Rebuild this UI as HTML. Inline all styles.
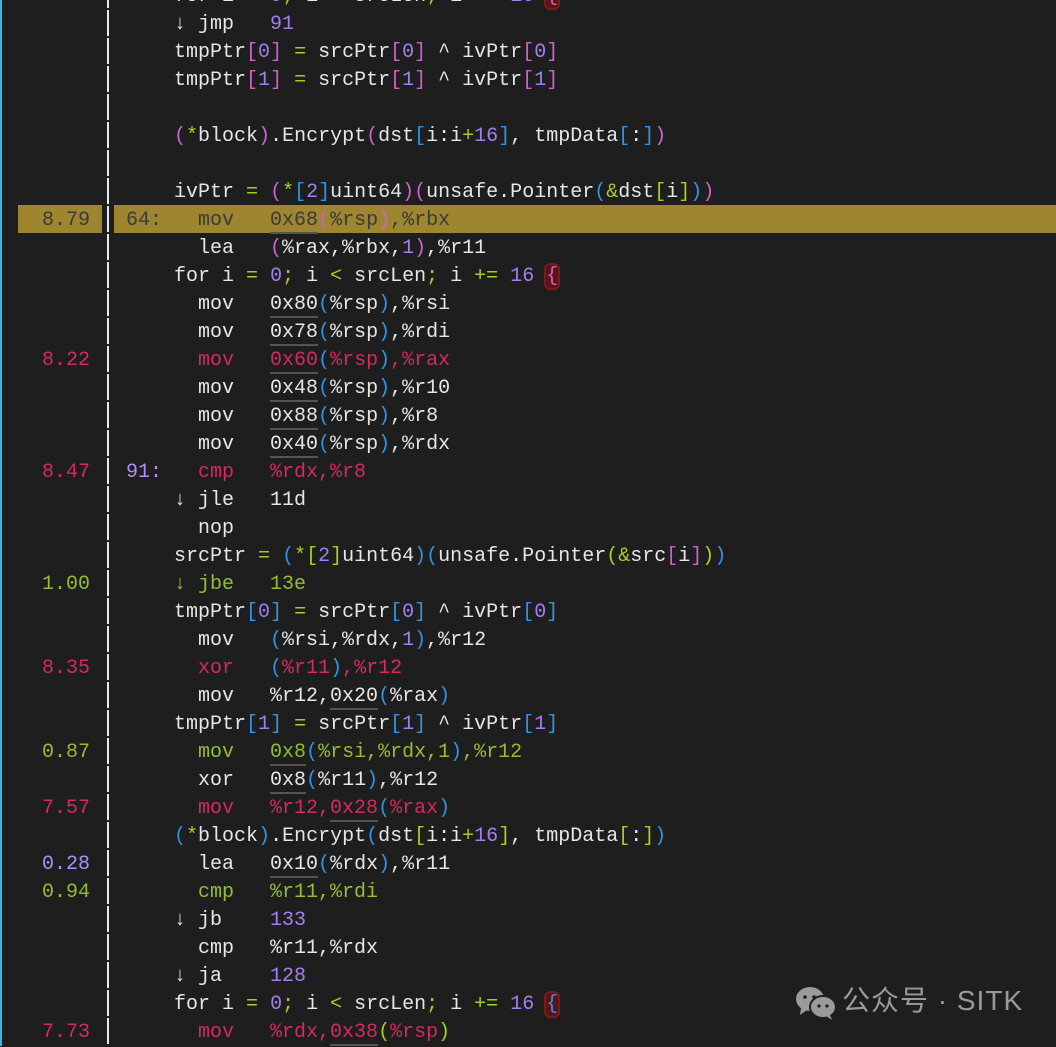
<!DOCTYPE html>
<html><head><meta charset="utf-8">
<style>
html,body{margin:0;padding:0;}
body{width:1056px;height:1046px;background:#1e1e1e;position:relative;overflow:hidden;font-family:"Liberation Mono",monospace;font-size:20px;color:#e6e6e6;}
.cy{position:absolute;left:0;top:0;width:2px;height:1046px;background:#3ab6d8;}
.row{position:absolute;left:0;width:1056px;height:28px;line-height:28px;}
.num{position:absolute;left:0;width:90px;text-align:right;white-space:pre;top:2px;}
.gl{position:absolute;left:107px;top:1px;width:2px;height:26px;background:#e8e8e8;}
.t{position:absolute;left:126px;white-space:pre;top:2px;}
.hl .hb1{position:absolute;left:18px;width:84px;top:0px;height:28px;background:#9e8530;}
.hl .hb2{position:absolute;left:114px;right:0;top:0px;height:28px;background:#9e8530;}
.hl .num,.hl .t{color:#3a3a36;}
.p{color:#d25fcf}.b{color:#2f93e8}.g{color:#a3cf2b}.n{color:#a27ff0}
.r{color:#d42a5c}.G{color:#93bd33}.P{color:#b08cff}
.u{border-bottom:2px solid #555;}
.br{outline:2px solid #7a1a1a;background:#5a1414;border-radius:4px;}
.wm{position:absolute;left:794px;top:986px;}
.wt{position:absolute;left:842px;top:983px;font-family:"Liberation Sans","Noto Sans CJK SC",sans-serif;font-size:28px;color:#9a9a9a;white-space:pre;line-height:36px;letter-spacing:1px;}
</style></head><body>
<div class="cy"></div>

<div class="row" style="top:-19px"><div class="gl"></div><div class="t">    for i <span class="g">=</span> <span class="n">0</span><span class="g">;</span> i <span class="g">&lt;</span> srcLen<span class="g">;</span> i <span class="g">+=</span> <span class="n">16</span> <span class="br p">{</span></div></div>
<div class="row" style="top:9px"><div class="gl"></div><div class="t">    ↓ jmp   <span class="n">91</span></div></div>
<div class="row" style="top:37px"><div class="gl"></div><div class="t">    tmpPtr<span class="p">[</span><span class="n">0</span><span class="p">]</span> <span class="g">=</span> srcPtr<span class="p">[</span><span class="n">0</span><span class="p">]</span> ^ ivPtr<span class="p">[</span><span class="n">0</span><span class="p">]</span></div></div>
<div class="row" style="top:65px"><div class="gl"></div><div class="t">    tmpPtr<span class="p">[</span><span class="n">1</span><span class="p">]</span> <span class="g">=</span> srcPtr<span class="p">[</span><span class="n">1</span><span class="p">]</span> ^ ivPtr<span class="p">[</span><span class="n">1</span><span class="p">]</span></div></div>
<div class="row" style="top:93px"><div class="gl"></div></div>
<div class="row" style="top:121px"><div class="gl"></div><div class="t">    <span class="p">(</span><span class="g">*</span>block<span class="p">)</span>.Encrypt<span class="p">(</span>dst<span class="b">[</span>i:i<span class="g">+</span><span class="n">16</span><span class="b">]</span>, tmpData<span class="b">[</span>:<span class="b">]</span><span class="p">)</span></div></div>
<div class="row" style="top:149px"><div class="gl"></div></div>
<div class="row" style="top:177px"><div class="gl"></div><div class="t">    ivPtr <span class="g">=</span> <span class="p">(</span><span class="g">*</span><span class="b">[</span><span class="n">2</span><span class="b">]</span>uint64<span class="p">)(</span>unsafe.Pointer<span class="b">(</span><span class="g">&amp;</span>dst<span class="g">[</span>i<span class="g">]</span><span class="b">)</span><span class="p">)</span></div></div>
<div class="row hl" style="top:205px"><div class="hb1"></div><div class="hb2"></div><div class="num">8.79</div><div class="gl"></div><div class="t">64:   mov   <span class="u">0x68</span><span class="p">(</span>%rsp<span class="p">)</span>,%rbx</div></div>
<div class="row" style="top:233px"><div class="gl"></div><div class="t">      lea   <span class="p">(</span>%rax,%rbx,<span class="n">1</span><span class="p">)</span>,%r11</div></div>
<div class="row" style="top:261px"><div class="gl"></div><div class="t">    for i <span class="g">=</span> <span class="n">0</span><span class="g">;</span> i <span class="g">&lt;</span> srcLen<span class="g">;</span> i <span class="g">+=</span> <span class="n">16</span> <span class="br p">{</span></div></div>
<div class="row" style="top:289px"><div class="gl"></div><div class="t">      mov   <span class="u">0x80</span><span class="b">(</span>%rsp<span class="b">)</span>,%rsi</div></div>
<div class="row" style="top:317px"><div class="gl"></div><div class="t">      mov   <span class="u">0x78</span><span class="b">(</span>%rsp<span class="b">)</span>,%rdi</div></div>
<div class="row" style="top:345px"><div class="num r">8.22</div><div class="gl"></div><div class="t r">      mov   <span class="u">0x60</span><span class="b">(</span>%rsp<span class="b">)</span>,%rax</div></div>
<div class="row" style="top:373px"><div class="gl"></div><div class="t">      mov   <span class="u">0x48</span><span class="b">(</span>%rsp<span class="b">)</span>,%r10</div></div>
<div class="row" style="top:401px"><div class="gl"></div><div class="t">      mov   <span class="u">0x88</span><span class="b">(</span>%rsp<span class="b">)</span>,%r8</div></div>
<div class="row" style="top:429px"><div class="gl"></div><div class="t">      mov   <span class="u">0x40</span><span class="b">(</span>%rsp<span class="b">)</span>,%rdx</div></div>
<div class="row" style="top:457px"><div class="num r">8.47</div><div class="gl"></div><div class="t r"><span class="P">91:</span>   cmp   %rdx,%r8</div></div>
<div class="row" style="top:485px"><div class="gl"></div><div class="t">    ↓ jle   11d</div></div>
<div class="row" style="top:513px"><div class="gl"></div><div class="t">      nop</div></div>
<div class="row" style="top:541px"><div class="gl"></div><div class="t">    srcPtr <span class="g">=</span> <span class="b">(</span><span class="g">*</span><span class="g">[</span><span class="n">2</span><span class="g">]</span>uint64<span class="b">)(</span>unsafe.Pointer<span class="g">(</span><span class="g">&amp;</span>src<span class="p">[</span>i<span class="p">]</span><span class="g">)</span><span class="b">)</span></div></div>
<div class="row" style="top:569px"><div class="num G">1.00</div><div class="gl"></div><div class="t G">    ↓ jbe   13e</div></div>
<div class="row" style="top:597px"><div class="gl"></div><div class="t">    tmpPtr<span class="b">[</span><span class="n">0</span><span class="b">]</span> <span class="g">=</span> srcPtr<span class="b">[</span><span class="n">0</span><span class="b">]</span> ^ ivPtr<span class="b">[</span><span class="n">0</span><span class="b">]</span></div></div>
<div class="row" style="top:625px"><div class="gl"></div><div class="t">      mov   <span class="b">(</span>%rsi,%rdx,<span class="n">1</span><span class="b">)</span>,%r12</div></div>
<div class="row" style="top:653px"><div class="num r">8.35</div><div class="gl"></div><div class="t r">      xor   <span class="b">(</span>%r11<span class="b">)</span>,%r12</div></div>
<div class="row" style="top:681px"><div class="gl"></div><div class="t">      mov   %r12,<span class="u">0x20</span><span class="b">(</span>%rax<span class="b">)</span></div></div>
<div class="row" style="top:709px"><div class="gl"></div><div class="t">    tmpPtr<span class="b">[</span><span class="n">1</span><span class="b">]</span> <span class="g">=</span> srcPtr<span class="b">[</span><span class="n">1</span><span class="b">]</span> ^ ivPtr<span class="b">[</span><span class="n">1</span><span class="b">]</span></div></div>
<div class="row" style="top:737px"><div class="num G">0.87</div><div class="gl"></div><div class="t G">      mov   <span class="u">0x8</span><span class="b">(</span>%rsi,%rdx,1<span class="b">)</span>,%r12</div></div>
<div class="row" style="top:765px"><div class="gl"></div><div class="t">      xor   <span class="u">0x8</span><span class="b">(</span>%r11<span class="b">)</span>,%r12</div></div>
<div class="row" style="top:793px"><div class="num r">7.57</div><div class="gl"></div><div class="t r">      mov   %r12,<span class="u">0x28</span><span class="b">(</span>%rax<span class="b">)</span></div></div>
<div class="row" style="top:821px"><div class="gl"></div><div class="t">    <span class="b">(</span><span class="g">*</span>block<span class="b">)</span>.Encrypt<span class="b">(</span>dst<span class="g">[</span>i:i<span class="g">+</span><span class="n">16</span><span class="g">]</span>, tmpData<span class="g">[</span>:<span class="g">]</span><span class="b">)</span></div></div>
<div class="row" style="top:849px"><div class="num P">0.28</div><div class="gl"></div><div class="t">      lea   <span class="u">0x10</span><span class="b">(</span>%rdx<span class="b">)</span>,%r11</div></div>
<div class="row" style="top:877px"><div class="num G">0.94</div><div class="gl"></div><div class="t G">      cmp   %r11,%rdi</div></div>
<div class="row" style="top:905px"><div class="gl"></div><div class="t">    ↓ jb    <span class="n">133</span></div></div>
<div class="row" style="top:933px"><div class="gl"></div><div class="t">      cmp   %r11,%rdx</div></div>
<div class="row" style="top:961px"><div class="gl"></div><div class="t">    ↓ ja    <span class="n">128</span></div></div>
<div class="row" style="top:989px"><div class="gl"></div><div class="t">    for i <span class="g">=</span> <span class="n">0</span><span class="g">;</span> i <span class="g">&lt;</span> srcLen<span class="g">;</span> i <span class="g">+=</span> <span class="n">16</span> <span class="br b">{</span></div></div>
<div class="row" style="top:1017px"><div class="num r">7.73</div><div class="gl"></div><div class="t r">      mov   %rdx,<span class="u">0x38</span><span class="g">(</span>%rsp<span class="g">)</span></div></div>

<svg class="wm" width="44" height="34" viewBox="0 0 44 34">
  <ellipse cx="16" cy="13" rx="14" ry="12" fill="#9a9a9a"/>
  <path d="M7 22 L6 29 L13 24 Z" fill="#9a9a9a"/>
  <ellipse cx="29" cy="21" rx="13" ry="11" fill="#9a9a9a" stroke="#1e1e1e" stroke-width="2"/>
  <path d="M36 29 L38 34 L32 30 Z" fill="#9a9a9a"/>
  <circle cx="11" cy="11" r="1.8" fill="#1e1e1e"/>
  <circle cx="20" cy="11" r="1.8" fill="#1e1e1e"/>
  <circle cx="25" cy="20" r="1.6" fill="#1e1e1e"/>
  <circle cx="33" cy="20" r="1.6" fill="#1e1e1e"/>
</svg>
<div class="wt">公众号 · SITK</div>
</body></html>
